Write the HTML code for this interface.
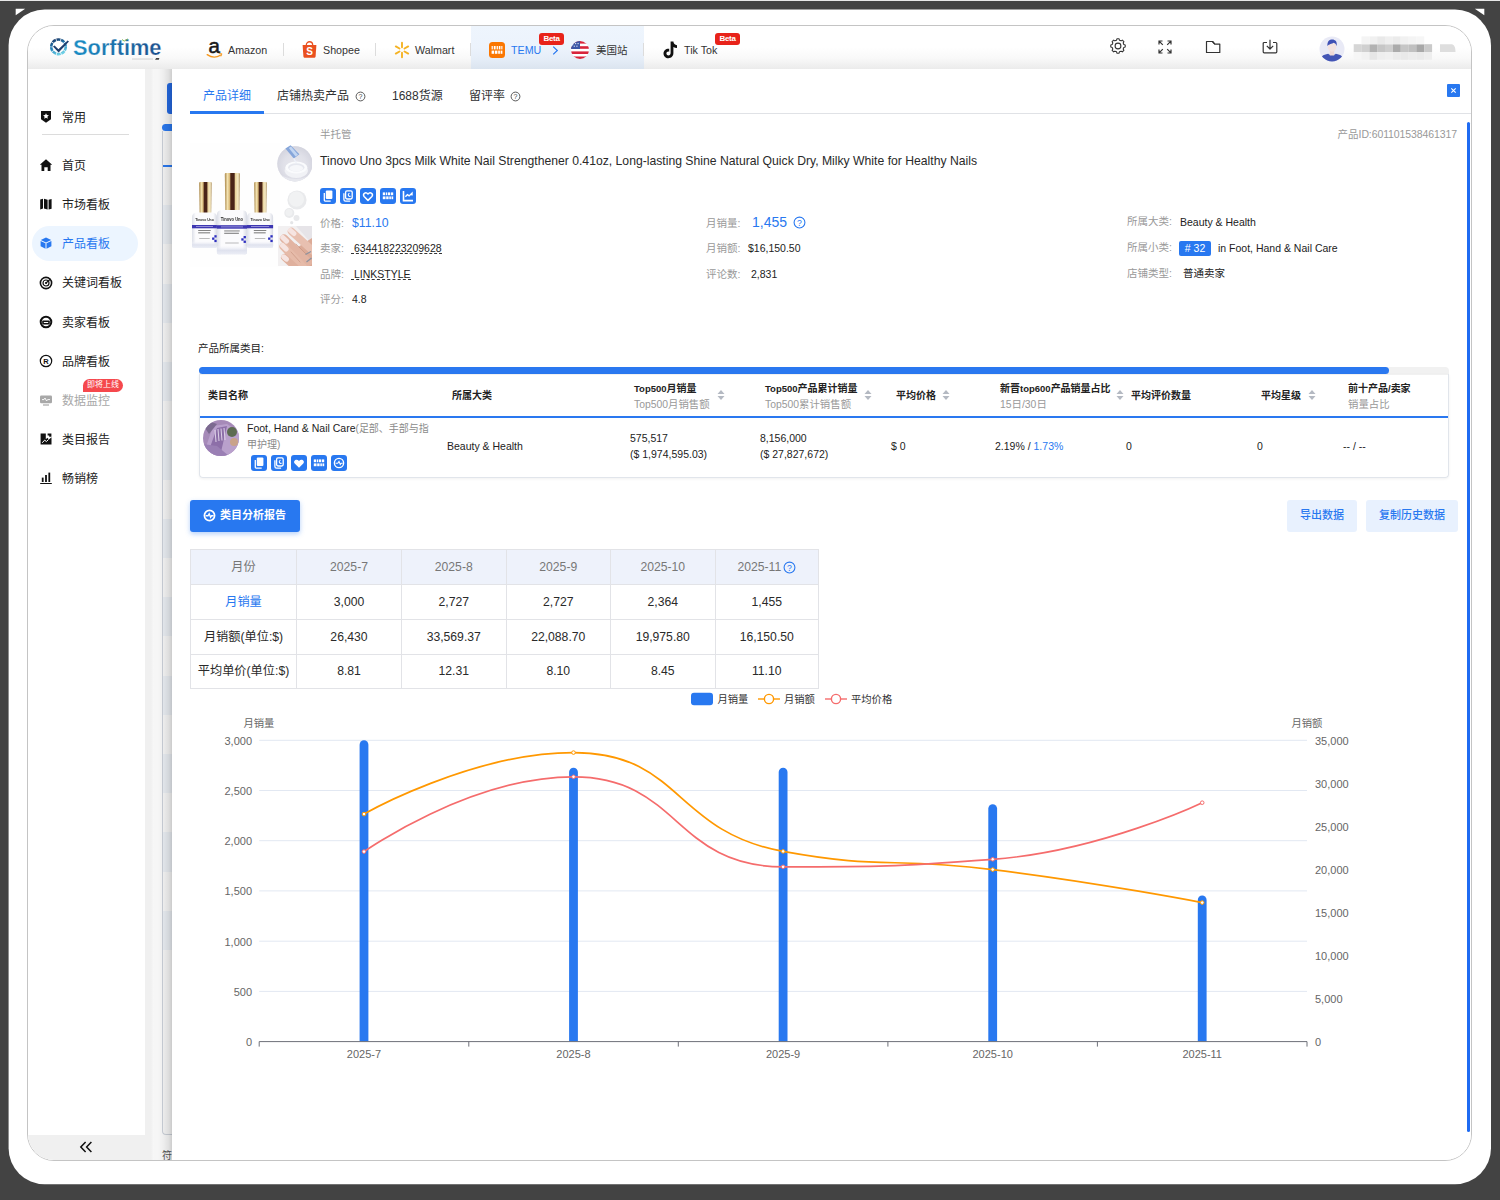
<!DOCTYPE html>
<html lang="zh"><head>
<meta charset="utf-8">
<title>Sorftime</title>
<style>
*{box-sizing:border-box;margin:0;padding:0}
html,body{width:1500px;height:1200px;overflow:hidden}
body{background:#434343;font-family:"Liberation Sans","Noto Sans CJK SC",sans-serif;font-size:12px;color:#333;position:relative}
.abs{position:absolute}
.t{position:absolute;white-space:nowrap;line-height:1}
#topline{position:absolute;left:0;top:0;width:1500px;height:1px;background:#e8e8e8}

#app{position:absolute;left:27px;top:25px;width:1445px;height:1136px;border:1px solid #c4c4c4;border-radius:27px;background:#fff;overflow:hidden}
/* inside #app coordinates are offset by (28,26) : use a wrapper shifted so we can use page coords */
#pg{position:absolute;left:-28px;top:-26px;width:1500px;height:1200px}
#header{position:absolute;left:27px;top:25px;width:1445px;height:44px;background:linear-gradient(180deg,#fff 0%,#fff 50%,#f9f9f9 75%,#ebebeb 100%)}
#side{position:absolute;left:27px;top:69px;width:118px;height:1092px;background:#fff}
#strip{position:absolute;left:145px;top:69px;width:27px;height:1092px;background:#f6f6f6}
#drawer{position:absolute;left:172px;top:69px;width:1300px;height:1092px;background:#fff;box-shadow:-1px 0 3px rgba(0,0,0,.06)}
.nav{position:absolute;left:62px;font-size:12px;color:#222;line-height:14px;margin-top:.6px;white-space:nowrap}
.hd{position:absolute;top:44px;font-size:10.7px;color:#333;line-height:12px;white-space:nowrap}
.sep{position:absolute;top:43px;width:1px;height:13px;background:#dcdcdc}
.beta{position:absolute;top:33px;width:25px;height:12px;background:#e8231a;border-radius:3px;color:#fff;font-size:8px;font-weight:bold;line-height:12px;text-align:center;letter-spacing:-.3px}
.tab{position:absolute;top:89px;font-size:12px;line-height:14px;color:#303133;white-space:nowrap}
.lbl{position:absolute;font-size:10.5px;color:#999;line-height:12px;white-space:nowrap}
.val{position:absolute;font-size:10.5px;color:#222;line-height:12px;white-space:nowrap}
.ib{position:absolute;width:16px;height:16px;background:#2878f0;border-radius:3px}
.ib svg{position:absolute;left:0;top:0;width:16px;height:16px}
.th{position:absolute;font-size:10px;font-weight:bold;color:#222;line-height:11px;white-space:nowrap}
.th .la{font-size:9.5px}
.th2{position:absolute;font-size:10.4px;color:#999;line-height:11px;white-space:nowrap}
.td{position:absolute;font-size:10.5px;color:#222;line-height:12px;white-space:nowrap}
.sort{position:absolute;width:8px;height:12px}
#mt{position:absolute;left:190px;top:549px;width:628px;table-layout:fixed;border-collapse:collapse;font-size:12.2px;color:#2a2a2a}
#mt td{border:1px solid #e2e3e7;height:34.6px;text-align:center;padding:0;line-height:14px}
#mt tr:first-child td{background:#eef2fb;color:#777;height:35.200px}
#mt tr:nth-child(2) td{height:35px}
#mt tr:nth-child(4) td{height:34px}
.ax{font-family:"Liberation Sans",sans-serif;font-size:11px;fill:#666}
</style>
<style id="cjst">.cj,.lw{display:inline-block;white-space:nowrap}</style></head>
<body>
<div id="topline"></div>
<svg class="abs" style="left:0;top:0" width="1500" height="40"><path d="M15.7 8.7H25.2L15.7 15.2Z" fill="#fff"></path><path d="M1484.3 8.7H1474.8L1484.3 15.2Z" fill="#fff"></path></svg>
<svg class="abs" style="left:0;top:0" width="1500" height="1200"><rect x="8.600" y="9.600" width="1482.400" height="1174.600" rx="36" fill="#fff"></rect></svg>
<div id="app"><div id="pg">
<div id="strip"></div>
<div class="abs" style="left:145px;top:69px;width:6px;height:1092px;background:#f0f0f0"></div>
<div class="abs" style="left:151px;top:69px;width:3px;height:1092px;background:linear-gradient(90deg,#f0f0f0,#f8f8f8)"></div>
<div class="abs" style="left:162px;top:131px;width:10px;height:1004px;background:#f3f3f3;border-left:1px solid #c9ced6;border-bottom:1px solid #c9ced6;border-radius:0 0 0 4px"></div>
<div class="abs" style="left:163px;top:165.800px;width:9px;height:784px;background:repeating-linear-gradient(180deg,#f4f4f4 0px,#f4f4f4 39.200px,#e8ecf1 39.200px,#e8ecf1 78.400px)"></div>
<div class="abs" style="left:167px;top:83px;width:8px;height:31px;background:#2468e0;border-radius:3px 0 0 3px"></div>
<div class="abs" style="left:162px;top:124px;width:12px;height:7px;background:#2a78ee;border-radius:3.500px 0 0 3.500px"></div>
<div class="abs" style="left:163px;top:165px;width:10px;height:1.500px;background:#2a78ee"></div>
<div class="t" style="left:162px;top:1151px;font-size:10px;color:#555"><span class="cj" style="width: 1em;">符</span></div>
<div class="abs" style="left:158px;top:69px;width:14px;height:1092px;background:linear-gradient(90deg,rgba(0,0,0,0),rgba(0,0,0,.035) 40%,rgba(0,0,0,.13))"></div>
<div id="drawer"></div>
<!-- tabs -->
<div class="abs" style="left:190px;top:113px;width:1282px;height:1px;background:#e0e2e6"></div>
<div class="abs" style="left:190px;top:111px;width:74px;height:2.500px;background:#2878f0"></div>
<div class="tab" style="left:203px;color:#2878f0"><span class="cj" style="width: 4em;">产品详细</span></div>
<div class="tab" style="left:277px"><span class="cj" style="width: 6em;">店铺热卖产品</span></div>
<svg class="abs" style="left:354.500px;top:90.500px" width="11" height="11" viewBox="0 0 10 10"><circle cx="5" cy="5" r="4" fill="none" stroke="#444" stroke-width=".8"></circle><text x="5" y="7.300" text-anchor="middle" font-family="Liberation Sans, sans-serif" font-size="6.500" fill="#444">?</text></svg>
<div class="tab" style="left:392px"><span class="lw" style="width: 26.7px;">1688</span><span class="cj" style="width: 2em;">货源</span></div>
<div class="tab" style="left:469px"><span class="cj" style="width: 3em;">留评率</span></div>
<svg class="abs" style="left:509.500px;top:90.500px" width="11" height="11" viewBox="0 0 10 10"><circle cx="5" cy="5" r="4" fill="none" stroke="#444" stroke-width=".8"></circle><text x="5" y="7.300" text-anchor="middle" font-family="Liberation Sans, sans-serif" font-size="6.500" fill="#444">?</text></svg>
<div class="abs" style="left:1447px;top:84px;width:13px;height:13px;background:#2878f0;border-radius:1px"></div>
<svg class="abs" style="left:1447px;top:84px" width="13" height="13" viewBox="0 0 13 13"><path d="M4.300 4.300l4.400 4.400M8.700 4.300L4.300 8.700" stroke="#fff" stroke-width="1.100"></path></svg>
<div class="abs" style="left:1467px;top:122px;width:3px;height:1010px;background:#1f6bf2;border-radius:1.500px"></div>
<!-- product image -->
<svg class="abs" style="left:188px;top:140px" width="128" height="130" viewBox="188 140 128 130">
<defs>
<linearGradient id="gold" x1="0" x2="1" y1="0" y2="0"><stop offset="0" stop-color="#a8864a"></stop><stop offset=".18" stop-color="#f3e2b0"></stop><stop offset=".32" stop-color="#d8b878"></stop><stop offset=".4" stop-color="#4a2418"></stop><stop offset=".62" stop-color="#4a2418"></stop><stop offset=".7" stop-color="#e8d29a"></stop><stop offset=".88" stop-color="#f6ebc8"></stop><stop offset="1" stop-color="#a88850"></stop></linearGradient>
<linearGradient id="btl" x1="0" x2="1" y1="0" y2="0"><stop offset="0" stop-color="#dcdfe8"></stop><stop offset=".15" stop-color="#fbfbfd"></stop><stop offset=".85" stop-color="#fbfbfd"></stop><stop offset="1" stop-color="#d8dbe4"></stop></linearGradient>
<linearGradient id="glass" x1="0" x2="0" y1="0" y2="1"><stop offset="0" stop-color="#f4f5fa" stop-opacity=".2"></stop><stop offset=".5" stop-color="#dfe2ee"></stop><stop offset="1" stop-color="#eceef6"></stop></linearGradient><filter id="soft" x="-5%" y="-5%" width="110%" height="110%"><feGaussianBlur stdDeviation=".45"></feGaussianBlur></filter><radialGradient id="jar" cx=".5" cy=".55" r=".6"><stop offset="0" stop-color="#fdfdfe"></stop><stop offset=".55" stop-color="#eef0f5"></stop><stop offset="1" stop-color="#cfd1dc"></stop></radialGradient>
<linearGradient id="skin" x1="0" x2="1" y1="0" y2="1"><stop offset="0" stop-color="#f4d9cf"></stop><stop offset="1" stop-color="#d9a08c"></stop></linearGradient>
<clipPath id="hc"><rect x="278" y="226" width="34" height="40"></rect></clipPath><clipPath id="imgclip"><rect x="190" y="143" width="122" height="124"></rect></clipPath><clipPath id="jarclip"><circle cx="294.900" cy="163.800" r="17.600"></circle></clipPath>
</defs>
<rect x="190" y="143" width="90" height="124" fill="#fefefe"></rect>
<!-- left bottle -->
<path d="M199.1 183.0q0-1 1-1H210.7q1 0 1 1L211.2 212.9H199.6z" fill="url(#gold)"></path>
<path d="M192.0 217.1q0-4.2 5.2-4.6000000000000005H211.8q5.2 .4 5.2 4.6000000000000005V245.6q0 2.500-2.500 2.500H194.5q-2.500 0-2.500-2.500z" fill="url(#btl)"></path>
<path d="M192.0 241.5H217.0V245.6q0 2.500-2.500 2.500H194.5q-2.500 0-2.500-2.500z" fill="url(#glass)"></path>
<rect x="192.0" y="225.0" width="25.0" height="3.3" fill="#3d36b2"></rect>
<rect x="196.0" y="226.2" width="17.0" height=".8" fill="#a9a6e0"></rect>
<text x="204.5" y="221.2" text-anchor="middle" font-family="Liberation Sans, sans-serif" font-weight="bold" font-size="4.3" fill="#1a1a1a" opacity=".96" textLength="18.5" lengthAdjust="spacingAndGlyphs">Tinovo Uno</text>
<rect x="198.2" y="230.1" width="12.5" height=".9" fill="#777"></rect>
<rect x="198.2" y="232.4" width="11.9" height=".9" fill="#666"></rect>
<rect x="199.2" y="238.1" width="10.5" height=".8" fill="#aaa"></rect>
<g fill="#2d2fc0"><rect x="214.4" y="235.2" width="2.3" height="2.3"></rect><rect x="212.1" y="237.5" width="2.3" height="2.3"></rect><rect x="214.4" y="239.8" width="2.3" height="2.3"></rect></g>
<!-- right bottle -->
<path d="M254.1 183.0q0-1 1-1H265.8q1 0 1 1L266.3 212.9H254.6z" fill="url(#gold)"></path>
<path d="M247.0 217.1q0-4.2 5.2-4.6000000000000005H267.9q5.2 .4 5.2 4.6000000000000005V245.6q0 2.500-2.500 2.500H249.5q-2.500 0-2.500-2.500z" fill="url(#btl)"></path>
<path d="M247.0 241.5H273.1V245.6q0 2.500-2.500 2.500H249.5q-2.500 0-2.500-2.500z" fill="url(#glass)"></path>
<rect x="247.0" y="225.0" width="26.1" height="3.3" fill="#3d36b2"></rect>
<rect x="251.0" y="226.2" width="18.1" height=".8" fill="#a9a6e0"></rect>
<text x="260.1" y="221.2" text-anchor="middle" font-family="Liberation Sans, sans-serif" font-weight="bold" font-size="4.3" fill="#1a1a1a" opacity=".96" textLength="19.3" lengthAdjust="spacingAndGlyphs">Tinovo Uno</text>
<rect x="253.8" y="230.1" width="12.5" height=".9" fill="#777"></rect>
<rect x="253.8" y="232.4" width="11.9" height=".9" fill="#666"></rect>
<rect x="254.8" y="238.1" width="10.5" height=".8" fill="#aaa"></rect>
<g fill="#2d2fc0"><rect x="270.4" y="235.2" width="2.3" height="2.3"></rect><rect x="268.1" y="237.5" width="2.3" height="2.3"></rect><rect x="270.4" y="239.8" width="2.3" height="2.3"></rect></g>
<!-- center bottle -->
<path d="M224.8 173.9q0-1 1-1H238.9q1 0 1 1L239.4 210.5H225.3z" fill="url(#gold)"></path>
<path d="M216.9 214.7q0-4.2 5.2-4.6000000000000005H241.8q5.2 .4 5.2 4.6000000000000005V252.0q0 2.500-2.500 2.500H219.4q-2.500 0-2.500-2.500z" fill="url(#btl)"></path>
<path d="M216.9 246.0H247.0V252.0q0 2.500-2.500 2.500H219.4q-2.500 0-2.500-2.500z" fill="url(#glass)"></path>
<rect x="216.9" y="225.2" width="30.1" height="3.5" fill="#3d36b2"></rect>
<rect x="220.9" y="226.5" width="22.1" height=".8" fill="#a9a6e0"></rect>
<text x="231.9" y="220.6" text-anchor="middle" font-family="Liberation Sans, sans-serif" font-weight="bold" font-size="5.1" fill="#1a1a1a" opacity=".96" textLength="22.3" lengthAdjust="spacingAndGlyphs">Tinovo Uno</text>
<rect x="224.2" y="230.5" width="15.5" height=".9" fill="#777"></rect>
<rect x="224.2" y="232.8" width="14.7" height=".9" fill="#666"></rect>
<rect x="225.2" y="242.6" width="13.5" height=".8" fill="#aaa"></rect>
<g fill="#2d2fc0"><rect x="243.6" y="236.0" width="2.3" height="2.3"></rect><rect x="241.3" y="238.3" width="2.3" height="2.3"></rect><rect x="243.6" y="240.6" width="2.3" height="2.3"></rect></g>
<!-- circle jar -->
<g clip-path="url(#imgclip)">
<circle cx="294.9" cy="163.8" r="17.6" fill="#d2d1dc"></circle>
<circle cx="294.9" cy="163.8" r="17.6" fill="url(#jar)" opacity=".5"></circle>
<g clip-path="url(#jarclip)"><path d="M276 170c4 6 12 9 20 9s14-3 18-9v14h-38z" fill="#e9eaf0" opacity=".85"></path></g>
<ellipse cx="296.300" cy="170.500" rx="11.600" ry="7.400" fill="#f1f2f6"></ellipse>
<ellipse cx="296.300" cy="167.600" rx="11" ry="6" fill="#fafbfd"></ellipse>
<ellipse cx="296.300" cy="167.400" rx="8.200" ry="4.200" fill="#e6e8ef"></ellipse>
<ellipse cx="296.300" cy="168.300" rx="6.800" ry="3.200" fill="#f6f7fa"></ellipse>
<path d="M285.400 148.600l5.200-3.400 8.800 9-5.600 4.200z" fill="#86a6da"></path><path d="M288.800 148l2.200-1.400 7 8.200-2.400 1.600z" fill="#c2d6f2"></path>
<path d="M293.600 158.400l2.800 4.600" stroke="#eef2fa" stroke-width="1.200"></path>
</g>
<!-- blobs -->
<circle cx="297" cy="200" r="9.600" fill="#e9eaec"></circle><circle cx="296.400" cy="199.200" r="7.600" fill="#f1f2f3"></circle>
<circle cx="289.300" cy="213" r="5" fill="#e9eaec"></circle><circle cx="289" cy="212.600" r="3.500" fill="#f0f1f2"></circle><circle cx="296.500" cy="218" r="3" fill="#e8e9eb"></circle><circle cx="291.700" cy="222.700" r="1.600" fill="#e4e5e7"></circle>
<!-- hand -->
<g clip-path="url(#hc)" filter="url(#soft)">
<rect x="278" y="226" width="34" height="40" fill="#f2f0f1"></rect>
<path d="M296 226h16v18z" fill="#e6e4e8"></path>
<path d="M298 247L312 238V266H290z" fill="#dcab97"></path>
<g stroke-linecap="round" fill="none">
<path d="M291.500 231.500L313 251" stroke="#e8c0b0" stroke-width="7.500"></path>
<path d="M284 238.500L308 262" stroke="#e2b4a2" stroke-width="8.200"></path>
<path d="M283.500 246.500L303 267" stroke="#e6bba9" stroke-width="8"></path>
<path d="M284.500 257.500L296 268" stroke="#dfb09d" stroke-width="7"></path>
<path d="M290.500 230.500l3.400 3M282.800 237.500l3.800 3.600M282.500 245.500l3.600 3.600M283.800 256.800l2.600 2.400" stroke="#f6e4e1" stroke-width="5"></path>
<path d="M296 244l10 10M291 252l9 10" stroke="#c58f7c" stroke-width="1" opacity=".6"></path>
</g>
<path d="M305.500 254.500l5.500-3M306.500 262l5-4" stroke="#8c92a0" stroke-width="1.300"></path>
</g>
</svg>

<!-- product info -->
<div class="lbl" style="left:320px;top:128px"><span class="cj" style="width: 3em;">半托管</span></div>
<div class="lbl" style="right:43px;top:128px;font-size:10.500px;letter-spacing:-.1px"><span class="cj" style="width: 2em;">产品</span><span class="lw" style="width: 98.44px;">ID:601101538461317</span></div>
<div class="t" id="ptitle" style="left:320px;top:155px;font-size:12.2px;color:#2a2a2a;line-height:13px">Tinovo Uno 3pcs Milk White Nail Strengthener 0.41oz, Long-lasting Shine Natural Quick Dry, Milky White for Healthy Nails</div>
<div class="ib" style="left:320px;top:188px"><svg viewBox="0 0 16 16"><rect x="5.800" y="2.600" width="6.600" height="8.400" rx="1" fill="#fff"></rect><path d="M4.300 5v7.300c0 .5.300.8.800.8h5.600" fill="none" stroke="#fff" stroke-width="1.300"></path></svg></div>
<div class="ib" style="left:340px;top:188px"><svg viewBox="0 0 16 16"><rect x="5.600" y="2.800" width="6.600" height="8.200" rx="1.400" fill="none" stroke="#fff" stroke-width="1.300"></rect><path d="M3.900 5.200v6.400c0 1 .6 1.600 1.600 1.600h4.600" fill="none" stroke="#fff" stroke-width="1.300"></path><path d="M9.600 5.200c-1.800.2-1.800 3 0 3.200h1" fill="none" stroke="#fff" stroke-width="1.100"></path></svg></div>
<div class="ib" style="left:360px;top:188px"><svg viewBox="0 0 16 16"><path d="M8 12.400L4.100 8.500c-2-2.400 1.500-5.300 3.900-2.500 2.400-2.800 5.900.1 3.900 2.500z" fill="none" stroke="#fff" stroke-width="1.500" stroke-linejoin="round"></path></svg></div>
<div class="ib" style="left:380px;top:188px"><svg viewBox="0 0 16 16"><g fill="#fff"><rect x="2.800" y="4.400" width="2.300" height="2.800"></rect><rect x="5.800" y="4.400" width="1.500" height="2.800"></rect><rect x="8" y="4.400" width="2.100" height="2.800"></rect><rect x="10.800" y="4.400" width="2.400" height="2.800"></rect><rect x="2.800" y="8.400" width="2.700" height="2.800"></rect><rect x="6.200" y="8.400" width="2.400" height="2.800"></rect><rect x="9.300" y="8.400" width="1.600" height="2.800"></rect><rect x="11.500" y="8.400" width="1.700" height="2.800"></rect></g></svg></div>
<div class="ib" style="left:400px;top:188px"><svg viewBox="0 0 16 16"><path d="M3.500 3v9.600h9.500" fill="none" stroke="#fff" stroke-width="1.600"></path><path d="M5.400 8.800l2-2.200 1.700 1.300 2.900-2.700v2.200" fill="none" stroke="#fff" stroke-width="1.400"></path></svg></div>

<div class="lbl" style="left:320px;top:217px"><span class="cj" style="width: 2em;">价格</span><span class="lw" style="width: 2.92px;">:</span></div><div class="t" style="left:352px;top:217px;font-size:12.3px;color:#2878f0">$11.10</div>
<div class="lbl" style="left:320px;top:242px"><span class="cj" style="width: 2em;">卖家</span><span class="lw" style="width: 2.92px;">:</span></div><div class="val" style="left:351px;top:242px;border-bottom:1px dashed #333;padding-left:3px;line-height:10px;top:243px">634418223209628</div>
<div class="lbl" style="left:320px;top:268px"><span class="cj" style="width: 2em;">品牌</span><span class="lw" style="width: 2.92px;">:</span></div><div class="val" style="left:351px;top:269px;border-bottom:1px dashed #333;padding-left:3px;line-height:10px">LINKSTYLE</div>
<div class="lbl" style="left:320px;top:293px"><span class="cj" style="width: 2em;">评分</span><span class="lw" style="width: 2.92px;">:</span></div><div class="val" style="left:352px;top:293px">4.8</div>

<div class="lbl" style="left:706px;top:217px"><span class="cj" style="width: 3em;">月销量</span><span class="lw" style="width: 2.92px;">:</span></div><div class="t" style="left:752px;top:215px;font-size:14px;color:#2878f0">1,455</div>
<svg class="abs" style="left:793px;top:216px" width="13" height="13" viewBox="0 0 12 12"><circle cx="6" cy="6" r="5" fill="none" stroke="#2878f0" stroke-width="1"></circle><text x="6" y="8.800" text-anchor="middle" font-family="Liberation Sans, sans-serif" font-size="8" fill="#2878f0">?</text></svg>
<div class="lbl" style="left:706px;top:242px"><span class="cj" style="width: 3em;">月销额</span><span class="lw" style="width: 2.92px;">:</span></div><div class="val" style="left:748px;top:242px">$16,150.50</div>
<div class="lbl" style="left:706px;top:268px"><span class="cj" style="width: 3em;">评论数</span><span class="lw" style="width: 2.92px;">:</span></div><div class="val" style="left:751px;top:268px">2,831</div>

<div class="lbl" style="left:1127px;top:215px"><span class="cj" style="width: 4em;">所属大类</span><span class="lw" style="width: 2.92px;">:</span></div><div class="val" style="left:1180px;top:216px">Beauty &amp; Health</div>
<div class="lbl" style="left:1127px;top:241px"><span class="cj" style="width: 4em;">所属小类</span><span class="lw" style="width: 2.92px;">:</span></div>
<div class="abs" style="left:1179px;top:241px;width:32px;height:15px;background:#2878f0;border-radius:2px;color:#fff;font-size:10.500px;line-height:15px;text-align:center;font-weight:normal"># 32</div>
<div class="val" style="left:1218px;top:242px">in Foot, Hand &amp; Nail Care</div>
<div class="lbl" style="left:1127px;top:267px"><span class="cj" style="width: 4em;">店铺类型</span><span class="lw" style="width: 2.92px;">:</span></div><div class="val" style="left:1183px;top:267px"><span class="cj" style="width: 4em;">普通卖家</span></div>

<div class="t" style="left:198px;top:343px;font-size:10.500px;color:#222"><span class="cj" style="width: 6em;">产品所属类目</span><span class="lw" style="width: 2.92px;">:</span></div>
<!-- category table -->
<div class="abs" style="left:199px;top:367px;width:1250px;height:8px;background:#f1f1f1;border-radius:4px 4px 0 0"></div>
<div class="abs" style="left:199px;top:367px;width:1190px;height:7px;background:#2a78f0;border-radius:3.500px"></div>
<div class="abs" style="left:199px;top:374px;width:1250px;height:104px;border:1px solid #e1e5eb;border-top:none;border-radius:0 0 4px 4px;box-shadow:0 1px 3px rgba(0,0,0,.06)"></div>
<div class="abs" style="left:200px;top:416px;width:1248px;height:2px;background:#2a78f0"></div>
<div class="th" style="left:208px;top:390px"><span class="cj" style="width: 4em;">类目名称</span></div>
<div class="th" style="left:452px;top:390px"><span class="cj" style="width: 4em;">所属大类</span></div>
<div class="th" style="left:634px;top:383px"><span class="la"><span class="lw" style="width: 32.56px;">Top500</span></span><span class="cj" style="width: 3em;">月销量</span></div><div class="th2" style="left:634px;top:399px"><span class="lw" style="width: 34.09px;">Top500</span><span class="cj" style="width: 4em;">月销售额</span></div>
<div class="th" style="left:765px;top:383px"><span class="la"><span class="lw" style="width: 32.56px;">Top500</span></span><span class="cj" style="width: 6em;">产品累计销量</span></div><div class="th2" style="left:765px;top:399px"><span class="lw" style="width: 34.09px;">Top500</span><span class="cj" style="width: 5em;">累计销售额</span></div>
<div class="th" style="left:896px;top:390px"><span class="cj" style="width: 4em;">平均价格</span></div>
<div class="th" style="left:1000px;top:383px"><span class="cj" style="width: 2em;">新晋</span><span class="la"><span class="lw" style="width: 30.63px;">top600</span></span><span class="cj" style="width: 6em;">产品销量占比</span></div><div class="th2" style="left:1000px;top:399px"><span class="lw" style="width: 11.56px;">15</span><span class="cj" style="width: 1em;">日</span><span class="lw" style="width: 14.45px;">/30</span><span class="cj" style="width: 1em;">日</span></div>
<div class="th" style="left:1131px;top:390px"><span class="cj" style="width: 6em;">平均评价数量</span></div>
<div class="th" style="left:1261px;top:390px"><span class="cj" style="width: 4em;">平均星级</span></div>
<div class="th" style="left:1348px;top:383px"><span class="cj" style="width: 4em;">前十产品</span><span class="la"><span class="lw" style="width: 2.64px;">/</span></span><span class="cj" style="width: 2em;">卖家</span></div><div class="th2" style="left:1348px;top:399px"><span class="cj" style="width: 4em;">销量占比</span></div>
<svg class="sort" style="left:717px;top:389px" viewBox="0 0 8 12"><path d="M4 1L7.500 5H.5zM4 11L.5 7h7z" fill="#b4b9c2"></path></svg>
<svg class="sort" style="left:864px;top:389px" viewBox="0 0 8 12"><path d="M4 1L7.500 5H.5zM4 11L.5 7h7z" fill="#b4b9c2"></path></svg>
<svg class="sort" style="left:942px;top:389px" viewBox="0 0 8 12"><path d="M4 1L7.500 5H.5zM4 11L.5 7h7z" fill="#b4b9c2"></path></svg>
<svg class="sort" style="left:1116px;top:389px" viewBox="0 0 8 12"><path d="M4 1L7.500 5H.5zM4 11L.5 7h7z" fill="#b4b9c2"></path></svg>
<svg class="sort" style="left:1308px;top:389px" viewBox="0 0 8 12"><path d="M4 1L7.500 5H.5zM4 11L.5 7h7z" fill="#b4b9c2"></path></svg>
<!-- row -->
<svg class="abs" style="left:203px;top:420px" width="36" height="36" viewBox="0 0 36 36"><defs><clipPath id="cc"><circle cx="18" cy="18" r="18"></circle></clipPath></defs>
<g clip-path="url(#cc)"><rect width="36" height="36" fill="#a68ab8"></rect><path d="M0 36L10 6l14-2 12 8v24z" fill="#b9a0cc"></path><path d="M6 30l8-22 10-2-6 26z" fill="#8d6fa8"></path><path d="M12 10l1 12M15 9l1 12M18 8.500l1 12M21 8l1 12" stroke="#e6dcee" stroke-width=".9"></path><circle cx="29" cy="12" r="5" fill="#5d6b52"></circle><circle cx="31" cy="22" r="4" fill="#c9a28a"></circle><path d="M0 24l14 2 12 10H0z" fill="#9a7fb4"></path><path d="M2 8l6-6 6 2-8 10z" fill="#7c6a90"></path></g></svg>
<div class="td" style="left:247px;top:422px"><span class="lw" style="width: 108.56px;">Foot, Hand &amp; Nail Care</span><span style="color:#8a8a8a;font-size:10px"><span class="lw" style="width: 3.34px;">(</span><span class="cj" style="width: 7em;">足部、手部与指</span></span></div>
<div class="td" style="left:247px;top:439px;color:#8a8a8a;font-size:10px"><span class="cj" style="width: 3em;">甲护理</span><span class="lw" style="width: 3.34px;">)</span></div>
<div class="ib" style="left:251px;top:455px"><svg viewBox="0 0 16 16"><rect x="5.800" y="2.600" width="6.600" height="8.400" rx="1" fill="#fff"></rect><path d="M4.300 5v7.300c0 .5.300.8.800.8h5.600" fill="none" stroke="#fff" stroke-width="1.300"></path></svg></div>
<div class="ib" style="left:271px;top:455px"><svg viewBox="0 0 16 16"><rect x="5.600" y="2.800" width="6.600" height="8.200" rx="1.400" fill="none" stroke="#fff" stroke-width="1.300"></rect><path d="M3.900 5.200v6.400c0 1 .6 1.600 1.600 1.600h4.600" fill="none" stroke="#fff" stroke-width="1.300"></path><path d="M9.600 5.200c-1.800.2-1.800 3 0 3.200h1" fill="none" stroke="#fff" stroke-width="1.100"></path></svg></div>
<div class="ib" style="left:291px;top:455px"><svg viewBox="0 0 16 16"><path d="M8 12.800L3.700 8.500c-2.100-2.500 1.800-5.500 4.300-2.600 2.500-2.900 6.400.1 4.300 2.600z" fill="#fff"></path></svg></div>
<div class="ib" style="left:311px;top:455px"><svg viewBox="0 0 16 16"><g fill="#fff"><rect x="2.800" y="4.400" width="2.300" height="2.800"></rect><rect x="5.800" y="4.400" width="1.500" height="2.800"></rect><rect x="8" y="4.400" width="2.100" height="2.800"></rect><rect x="10.800" y="4.400" width="2.400" height="2.800"></rect><rect x="2.800" y="8.400" width="2.700" height="2.800"></rect><rect x="6.200" y="8.400" width="2.400" height="2.800"></rect><rect x="9.300" y="8.400" width="1.600" height="2.800"></rect><rect x="11.500" y="8.400" width="1.700" height="2.800"></rect></g></svg></div>
<div class="ib" style="left:331px;top:455px"><svg viewBox="0 0 16 16"><circle cx="8" cy="8" r="4.600" fill="none" stroke="#fff" stroke-width="1.400"></circle><path d="M4.600 8.200h2.200l1.200-1.800 1.300 3 .9-1.200h1.400" fill="none" stroke="#fff" stroke-width="1.100"></path></svg></div>
<div class="td" style="left:447px;top:440px">Beauty &amp; Health</div>
<div class="td" style="left:630px;top:432px">575,517</div><div class="td" style="left:630px;top:448px">($ 1,974,595.03)</div>
<div class="td" style="left:760px;top:432px">8,156,000</div><div class="td" style="left:760px;top:448px">($ 27,827,672)</div>
<div class="td" style="left:891px;top:440px">$ 0</div>
<div class="td" style="left:995px;top:440px">2.19% / <span style="color:#2878f0">1.73%</span></div>
<div class="td" style="left:1126px;top:440px">0</div>
<div class="td" style="left:1257px;top:440px">0</div>
<div class="td" style="left:1343px;top:440px">-- / --</div>
<!-- buttons -->
<div class="abs" style="left:190px;top:500px;width:110px;height:32px;background:#2878f0;border-radius:3px;box-shadow:0 2px 5px rgba(40,120,240,.35)"></div>
<svg class="abs" style="left:203px;top:509px" width="13" height="13" viewBox="0 0 13 13"><circle cx="6.500" cy="6.500" r="5.100" fill="none" stroke="#fff" stroke-width="1.700"></circle><path d="M2.600 6.800h2.400l1.200-2 1.400 3.400 1-1.400h2" fill="none" stroke="#fff" stroke-width="1.400"></path></svg>
<div class="t" style="left:220px;top:510px;font-size:11px;font-weight:bold;color:#fff"><span class="cj" style="width: 6em;">类目分析报告</span></div>
<div class="abs" style="left:1287px;top:500px;width:70px;height:32px;background:#e8f1fe;border-radius:3px;color:#2878f0;font-size:11px;line-height:31px;text-align:center;font-weight:500"><span class="cj" style="width: 4em;">导出数据</span></div>
<div class="abs" style="left:1366px;top:500px;width:92px;height:32px;background:#e8f1fe;border-radius:3px;color:#2878f0;font-size:11px;line-height:31px;text-align:center;font-weight:500"><span class="cj" style="width: 6em;">复制历史数据</span></div>
<!-- monthly table -->
<table id="mt"><tbody><tr><td style="width:106px"><span class="cj" style="width: 2em;">月份</span></td><td style="width:105px">2025-7</td><td style="width:104.5px">2025-8</td><td style="width:104.5px">2025-9</td><td style="width:104.5px">2025-10</td><td style="width:103.5px">2025-11 <svg width="13" height="13" viewBox="0 0 12 12" style="vertical-align:-2.500px;margin-left:-1.500px"><circle cx="6" cy="6" r="5" fill="none" stroke="#2878f0" stroke-width="1"></circle><text x="6" y="8.800" text-anchor="middle" font-family="Liberation Sans, sans-serif" font-size="8" fill="#2878f0">?</text></svg></td></tr>
<tr><td style="color:#2878f0"><span class="cj" style="width: 3em;">月销量</span></td><td>3,000</td><td>2,727</td><td>2,727</td><td>2,364</td><td>1,455</td></tr>
<tr><td><span class="cj" style="width: 3em;">月销额</span><span class="lw" style="width: 4.06px;">(</span><span class="cj" style="width: 2em;">单位</span><span class="lw" style="width: 14.23px;">:$)</span></td><td>26,430</td><td>33,569.37</td><td>22,088.70</td><td>19,975.80</td><td>16,150.50</td></tr>
<tr><td><span class="cj" style="width: 4em;">平均单价</span><span class="lw" style="width: 4.06px;">(</span><span class="cj" style="width: 2em;">单位</span><span class="lw" style="width: 14.23px;">:$)</span></td><td>8.81</td><td>12.31</td><td>8.10</td><td>8.45</td><td>11.10</td></tr></tbody></table>
<svg class="abs" style="left:172px;top:688px" width="1290" height="400" viewBox="172 688 1290 400">
<rect x="691" y="692.800" width="22" height="12.400" rx="3" fill="#2878f0"></rect>
<path d="M758 699h22" stroke="#ff9800" stroke-width="1.400"></path><circle cx="769" cy="699" r="4.600" fill="#fff" stroke="#ff9800" stroke-width="1.400"></circle>
<path d="M825 699h22" stroke="#f56c6c" stroke-width="1.400"></path><circle cx="836" cy="699" r="4.600" fill="#fff" stroke="#f56c6c" stroke-width="1.400"></circle>
<text x="252" y="1045.9" text-anchor="end" class="ax">0</text>
<path d="M259.2 991.4H1307.0" stroke="#e2e8f2" stroke-width="1"></path>
<text x="252" y="995.7" text-anchor="end" class="ax">500</text>
<path d="M259.2 941.2H1307.0" stroke="#e2e8f2" stroke-width="1"></path>
<text x="252" y="945.5" text-anchor="end" class="ax">1,000</text>
<path d="M259.2 890.9H1307.0" stroke="#e2e8f2" stroke-width="1"></path>
<text x="252" y="895.2" text-anchor="end" class="ax">1,500</text>
<path d="M259.2 840.7H1307.0" stroke="#e2e8f2" stroke-width="1"></path>
<text x="252" y="845.0" text-anchor="end" class="ax">2,000</text>
<path d="M259.2 790.5H1307.0" stroke="#e2e8f2" stroke-width="1"></path>
<text x="252" y="794.8" text-anchor="end" class="ax">2,500</text>
<path d="M259.2 740.3H1307.0" stroke="#e2e8f2" stroke-width="1"></path>
<text x="252" y="744.6" text-anchor="end" class="ax">3,000</text>
<text x="1315" y="1045.9" class="ax">0</text>
<text x="1315" y="1002.9" class="ax">5,000</text>
<text x="1315" y="959.8" class="ax">10,000</text>
<text x="1315" y="916.8" class="ax">15,000</text>
<text x="1315" y="873.7" class="ax">20,000</text>
<text x="1315" y="830.7" class="ax">25,000</text>
<text x="1315" y="787.6" class="ax">30,000</text>
<text x="1315" y="744.6" class="ax">35,000</text>
<path d="M359.6 1041.6V744.7a4.4 4.4 0 0 1 8.8 0V1041.6z" fill="#2878f0"></path>
<path d="M569.1 1041.6V772.1a4.4 4.4 0 0 1 8.8 0V1041.6z" fill="#2878f0"></path>
<path d="M778.7 1041.6V772.1a4.4 4.4 0 0 1 8.8 0V1041.6z" fill="#2878f0"></path>
<path d="M988.3 1041.6V808.6a4.4 4.4 0 0 1 8.8 0V1041.6z" fill="#2878f0"></path>
<path d="M1197.8 1041.6V899.9a4.4 4.4 0 0 1 8.8 0V1041.6z" fill="#2878f0"></path>
<path d="M259.2 1041.6H1307.0" stroke="#6e7079" stroke-width="1"></path>
<path d="M259.2 1041.6v5" stroke="#6e7079" stroke-width="1"></path>
<path d="M468.8 1041.6v5" stroke="#6e7079" stroke-width="1"></path>
<path d="M678.3 1041.6v5" stroke="#6e7079" stroke-width="1"></path>
<path d="M887.9 1041.6v5" stroke="#6e7079" stroke-width="1"></path>
<path d="M1097.4 1041.6v5" stroke="#6e7079" stroke-width="1"></path>
<path d="M1307.0 1041.6v5" stroke="#6e7079" stroke-width="1"></path>
<text x="364.0" y="1058" text-anchor="middle" class="ax">2025-7</text>
<text x="573.5" y="1058" text-anchor="middle" class="ax">2025-8</text>
<text x="783.1" y="1058" text-anchor="middle" class="ax">2025-9</text>
<text x="992.7" y="1058" text-anchor="middle" class="ax">2025-10</text>
<text x="1202.2" y="1058" text-anchor="middle" class="ax">2025-11</text>
<path d="M364.0 814.1 C364.0 814.1 471.9 752.6 573.5 752.6 C681.4 752.6 673.3 831.4 783.1 851.4 C882.8 869.6 888.3 856.9 992.7 869.6 C1097.9 882.5 1202.2 902.6 1202.2 902.6" fill="none" stroke="#ff9800" stroke-width="1.700"></path>
<path d="M364.0 851.6 C364.0 851.6 470.1 776.8 573.5 776.8 C679.6 776.8 673.9 866.8 783.1 866.8 C883.5 866.8 889.7 866.8 992.7 859.3 C1099.3 851.6 1202.2 802.7 1202.2 802.7" fill="none" stroke="#f56c6c" stroke-width="1.700"></path>
<circle cx="364.0" cy="814.1" r="1.800" fill="#fff" stroke="#ff9800" stroke-width="1"></circle>
<circle cx="573.5" cy="752.6" r="1.800" fill="#fff" stroke="#ff9800" stroke-width="1"></circle>
<circle cx="783.1" cy="851.4" r="1.800" fill="#fff" stroke="#ff9800" stroke-width="1"></circle>
<circle cx="992.7" cy="869.6" r="1.800" fill="#fff" stroke="#ff9800" stroke-width="1"></circle>
<circle cx="1202.2" cy="902.6" r="1.800" fill="#fff" stroke="#ff9800" stroke-width="1"></circle>
<circle cx="364.0" cy="851.6" r="1.800" fill="#fff" stroke="#f56c6c" stroke-width="1"></circle>
<circle cx="573.5" cy="776.8" r="1.800" fill="#fff" stroke="#f56c6c" stroke-width="1"></circle>
<circle cx="783.1" cy="866.8" r="1.800" fill="#fff" stroke="#f56c6c" stroke-width="1"></circle>
<circle cx="992.7" cy="859.3" r="1.800" fill="#fff" stroke="#f56c6c" stroke-width="1"></circle>
<circle cx="1202.2" cy="802.7" r="1.800" fill="#fff" stroke="#f56c6c" stroke-width="1"></circle>
</svg>
<div class="t" style="left:717.500px;top:695px;font-size:10.300px;color:#333"><span class="cj" style="width: 3em;">月销量</span></div>
<div class="t" style="left:784px;top:695px;font-size:10.300px;color:#333"><span class="cj" style="width: 3em;">月销额</span></div>
<div class="t" style="left:851px;top:695px;font-size:10.300px;color:#333"><span class="cj" style="width: 4em;">平均价格</span></div>
<div class="t" style="left:243.500px;top:718.500px;font-size:10.300px;color:#666"><span class="cj" style="width: 3em;">月销量</span></div>
<div class="t" style="left:1291.500px;top:718.500px;font-size:10.300px;color:#666"><span class="cj" style="width: 3em;">月销额</span></div>


<div id="side"></div>
<!-- nav icons -->
<svg class="abs" style="left:38px;top:109px" width="16" height="16" viewBox="0 0 16 16"><path d="M3 2h10v8.200L8 13.800 3 10.200z" fill="#111"></path><path d="M8 4.200l.9 1.900 2 .2-1.500 1.400.4 2L8 8.700l-1.800 1 .4-2L5.100 6.300l2-.2z" fill="#fff"></path></svg>
<div class="nav" style="top:110px"><span class="cj" style="width: 2em;">常用</span></div>
<div class="abs" style="left:42px;top:134px;width:87px;height:1px;background:#dcdcdc"></div>
<svg class="abs" style="left:38px;top:157px" width="16" height="16" viewBox="0 0 16 16"><path d="M8 2.200l6.200 5.600h-1.700V14H9.700v-3.800H6.300V14H3.500V7.800H1.800z" fill="#111"></path></svg>
<div class="nav" style="top:158px"><span class="cj" style="width: 2em;">首页</span></div>
<svg class="abs" style="left:38px;top:196px" width="16" height="16" viewBox="0 0 16 16"><path d="M2.200 3.600l2.800-.8v9.800l-2.800.8zM6 2.800l3.600 1v9.800l-3.600-1zM10.600 3.800l3-.8v9.800l-3 .8z" fill="#111"></path></svg>
<div class="nav" style="top:197px"><span class="cj" style="width: 4em;">市场看板</span></div>
<div class="abs" style="left:32px;top:226px;width:106px;height:35px;border-radius:18px;background:#ecf5ff"></div>
<svg class="abs" style="left:38px;top:235px" width="16" height="16" viewBox="0 0 16 16"><path d="M8 2.400l5.200 2.500L8 7.400 2.800 4.900z" fill="#2878f0"></path><path d="M2.600 5.900l4.900 2.400v5.500l-4.900-2.500zM13.400 5.900L8.500 8.300v5.500l4.900-2.500z" fill="#2878f0"></path></svg>
<div class="nav" style="top:236px;color:#2878f0"><span class="cj" style="width: 4em;">产品看板</span></div>
<svg class="abs" style="left:38px;top:275px" width="16" height="16" viewBox="0 0 16 16"><circle cx="8" cy="8" r="5.600" fill="none" stroke="#111" stroke-width="1.600"></circle><circle cx="8" cy="8" r="3" fill="none" stroke="#111" stroke-width="1.200"></circle><circle cx="8" cy="8" r="1.100" fill="#111"></circle><path d="M8 8l4.500-4" stroke="#111" stroke-width="1.100"></path></svg>
<div class="nav" style="top:275px"><span class="cj" style="width: 5em;">关键词看板</span></div>
<svg class="abs" style="left:38px;top:314px" width="16" height="16" viewBox="0 0 16 16"><circle cx="8" cy="8" r="5.300" fill="none" stroke="#111" stroke-width="2"></circle><rect x="4.200" y="6.600" width="7.600" height="3.800" rx=".8" fill="#111"></rect><rect x="5.800" y="8" width="4.400" height="1" fill="#fff"></rect></svg>
<div class="nav" style="top:315px"><span class="cj" style="width: 4em;">卖家看板</span></div>
<svg class="abs" style="left:38px;top:353px" width="16" height="16" viewBox="0 0 16 16"><circle cx="8" cy="8" r="5.700" fill="none" stroke="#111" stroke-width="1.200"></circle><text x="8" y="10.800" text-anchor="middle" font-family="Liberation Sans, sans-serif" font-weight="bold" font-size="7.500" fill="#111">R</text></svg>
<div class="nav" style="top:354px"><span class="cj" style="width: 4em;">品牌看板</span></div>
<svg class="abs" style="left:38px;top:392px" width="16" height="16" viewBox="0 0 16 16"><rect x="2" y="3.600" width="12" height="7.600" rx="1.200" fill="#a8a8a8"></rect><path d="M4 7.600h2l1-1.600 1.600 3 1-1.400H12" fill="none" stroke="#fff" stroke-width=".9"></path><rect x="5" y="12.400" width="6" height="1.200" fill="#a8a8a8"></rect></svg>
<div class="nav" style="top:393px;color:#a8a8a8"><span class="cj" style="width: 4em;">数据监控</span></div>
<div class="abs" style="left:83px;top:379px;width:40px;height:12.500px;background:#f5484d;border-radius:6.500px 6.500px 6.500px 0;color:#fff;font-size:8px;line-height:12.500px;text-align:center"><span class="cj" style="width: 4em;">即将上线</span></div>
<svg class="abs" style="left:38px;top:431px" width="16" height="16" viewBox="0 0 16 16"><path d="M2.600 2.600h5.200v5.600l1.600-1.400 1.500 1.700 2.600-2.300V13.400H2.600z" fill="#111"></path><path d="M4.200 11.800l2.500-2.700 1.700 1.500 2.200-2.200" stroke="#fff" stroke-width="1" fill="none"></path><path d="M9.600 2.600h3.800v3.200h-2.200v-1.400H9.600z" fill="#111"></path></svg>
<div class="nav" style="top:432px"><span class="cj" style="width: 4em;">类目报告</span></div>
<svg class="abs" style="left:38px;top:470px" width="16" height="16" viewBox="0 0 16 16"><rect x="3.800" y="7.600" width="1.800" height="4.400" fill="#111"></rect><rect x="7.100" y="5" width="1.800" height="7" fill="#111"></rect><rect x="10.400" y="2.600" width="1.800" height="9.400" fill="#111"></rect><rect x="2.200" y="13" width="11.600" height="1" fill="#111"></rect></svg>
<div class="nav" style="top:471px"><span class="cj" style="width: 3em;">畅销榜</span></div>
<div class="abs" style="left:27px;top:1135px;width:118px;height:26px;background:#f0f0f0"></div>
<svg class="abs" style="left:78px;top:1139px" width="16" height="16" viewBox="0 0 16 16" fill="none" stroke="#111" stroke-width="1.500"><path d="M7.600 3L2.800 8l4.800 5M13.400 3L8.600 8l4.800 5"></path></svg>

<div id="header"></div>
<!-- logo -->
<svg class="abs" style="left:46px;top:34px" width="30" height="26" viewBox="0 0 30 26">
<defs><linearGradient id="lg1" x1="0.2" y1="0" x2="0.6" y2="1"><stop offset="0" stop-color="#1f3f6e"></stop><stop offset=".45" stop-color="#1f7fb8"></stop><stop offset="1" stop-color="#6fd0e6"></stop></linearGradient></defs>
<circle cx="12.5" cy="12.8" r="7.3" fill="none" stroke="url(#lg1)" stroke-width="2.6" stroke-dasharray="3.900 .7"></circle>
<path d="M8.6 11.4 L12.4 15.2 L21.6 6.6 L23 7.4 L12.6 18.4 L7 12.6Z" fill="#1f3f6e"></path>
</svg>
<svg class="abs" style="left:72px;top:34px" width="95" height="30" viewBox="0 0 95 30">
<defs><linearGradient id="lg2" x1="0" y1="0" x2="1" y2="0"><stop offset="0" stop-color="#1b8fc6"></stop><stop offset="1" stop-color="#1d4f8c"></stop></linearGradient></defs>
<text x="1" y="21" font-family="Liberation Sans, sans-serif" font-weight="bold" font-size="21.5" fill="url(#lg2)" stroke="#fff" stroke-width=".25" textLength="88.5" lengthAdjust="spacingAndGlyphs">Sorftime</text>
<path d="M50 5.5l2.2 1.6 3.6-2.2" fill="none" stroke="#7ab648" stroke-width=".9"></path>
<rect x="60" y="24.4" width="21" height="1.3" fill="#dadada"></rect><path d="M83 25.8l1.2-1.800h3.200l-.6 1.800z" fill="#444"></path>
</svg>
<!-- amazon -->
<svg class="abs" style="left:206px;top:39px" width="18" height="20" viewBox="0 0 18 20">
<text x="2.6" y="14.2" font-family="Liberation Sans, sans-serif" font-size="20.5" fill="#1a1a1a" stroke="#1a1a1a" stroke-width=".55">a</text>
<path d="M1.2 15.6c4.2 3 9.4 3 13.200.6" fill="none" stroke="#f7981d" stroke-width="1.3" stroke-linecap="round"></path>
<path d="M13 14.6l2.900.200-1 2.600" fill="none" stroke="#f7981d" stroke-width="1" stroke-linejoin="round"></path>
</svg>
<div class="hd" style="left:228px">Amazon</div>
<div class="sep" style="left:283px"></div>
<!-- shopee -->
<svg class="abs" style="left:301px;top:40px" width="17" height="19" viewBox="0 0 17 19">
<path d="M5.3 5.2c0-4.6 6.4-4.6 6.4 0" fill="none" stroke="#ea501f" stroke-width="1.3"></path>
<path d="M1.6 5h13.800l-.8 11.200c-.1 1-.8 1.600-1.800 1.600H4.200c-1 0-1.700-.6-1.800-1.600z" fill="#ea501f"></path>
<text x="8.500" y="15.400" text-anchor="middle" font-family="Liberation Sans, sans-serif" font-weight="bold" font-size="10" fill="#fff">S</text>
</svg>
<div class="hd" style="left:323px">Shopee</div>
<div class="sep" style="left:375px"></div>
<!-- walmart -->
<svg class="abs" style="left:393px;top:41px" width="18" height="18" viewBox="0 0 18 18">
<g stroke="#f5b324" stroke-width="1.9" stroke-linecap="round">
<path d="M9 1.800V6.200M9 11.800V16.200M2.800 5.400L6.500 7.500M11.500 10.500L15.200 12.600M2.800 12.600L6.500 10.500M11.500 7.500L15.200 5.400"></path></g>
</svg>
<div class="hd" style="left:415px">Walmart</div>
<div class="sep" style="left:470px"></div>
<!-- temu -->
<div class="abs" style="left:471px;top:26px;width:173px;height:43px;background:linear-gradient(180deg,#eef5fd 0%,#ecf3fc 50%,#e6eef8 75%,#dbe4ef 100%)"></div>
<svg class="abs" style="left:489px;top:42px" width="16" height="16" viewBox="0 0 16 16">
<rect width="16" height="16" rx="3.500" fill="#fb7701"></rect>
<g fill="#fff"><rect x="2.600" y="4" width="1.200" height="3.400"></rect><rect x="4.800" y="4" width="1.800" height="3.400"></rect><rect x="7.600" y="4" width="1.300" height="3.400"></rect><rect x="9.800" y="4" width="1.600" height="3.400"></rect><rect x="12.300" y="4" width="1.100" height="3.400"></rect>
<rect x="2.600" y="8.600" width="2.600" height="3.200"></rect><rect x="6" y="8.600" width="2.400" height="3.200"></rect><rect x="9.200" y="8.600" width="1.700" height="3.200"></rect><rect x="11.600" y="8.600" width="1.800" height="3.200"></rect></g>
</svg>
<div class="hd" style="left:511px;color:#2878f0">TEMU</div>
<div class="beta" style="left:539px">Beta</div>
<svg class="abs" style="left:551px;top:45px" width="9" height="11" viewBox="0 0 9 11"><path d="M2.200 1.600L6.300 5.500L2.200 9.400" fill="none" stroke="#2878f0" stroke-width="1.200"></path></svg>
<svg class="abs" style="left:571px;top:41px" width="18" height="18" viewBox="0 0 18 18">
<defs><clipPath id="fc"><circle cx="9" cy="9" r="9"></circle></clipPath></defs>
<g clip-path="url(#fc)"><rect width="18" height="18" fill="#fff"></rect>
<g fill="#d8243b"><rect y="0" width="18" height="2.600"></rect><rect y="5.200" width="18" height="2.600"></rect><rect y="10.400" width="18" height="2.600"></rect><rect y="15.500" width="18" height="2.600"></rect></g>
<rect width="9" height="8" fill="#3c56a6"></rect><g fill="#fff" opacity=".8"><rect x="1.500" y="2" width="1.200" height="1.200"></rect><rect x="4" y="2" width="1.200" height="1.200"></rect><rect x="6.500" y="2" width="1.200" height="1.200"></rect><rect x="2.700" y="4.600" width="1.200" height="1.200"></rect><rect x="5.300" y="4.600" width="1.200" height="1.200"></rect></g></g>
</svg>
<div class="hd" style="left:596px;font-size:10.500px"><span class="cj" style="width: 3em;">美国站</span></div>
<div class="sep" style="left:643px"></div>
<!-- tiktok -->
<svg class="abs" style="left:662px;top:40px" width="17" height="20" viewBox="0 0 17 20">
<path d="M8.600 1.500h2.800c.2 2 1.400 3.400 3.600 3.700v2.900c-1.400 0-2.600-.4-3.600-1.100v6.100c0 3.200-2.300 5.200-5 5.200-2.800 0-4.900-2.200-4.900-4.800 0-3 2.500-5.200 5.700-4.800v3c-1.500-.4-2.800.5-2.800 1.800 0 1.100.9 1.900 2 1.900 1.300 0 2.200-.9 2.200-2.400z" fill="#111"></path>
</svg>
<div class="hd" style="left:684px">Tik Tok</div>
<div class="beta" style="left:715px">Beta</div>
<!-- right icons -->
<svg class="abs" style="left:1109px;top:37px" width="18" height="18" viewBox="0 0 18 18" fill="none" stroke="#333" stroke-width="1.1"><path d="M7.55 3.18 L7.92 1.78 L10.08 1.78 L10.45 3.18 L12.09 3.86 L13.34 3.13 L14.87 4.66 L14.14 5.91 L14.82 7.55 L16.22 7.92 L16.22 10.08 L14.82 10.45 L14.14 12.09 L14.87 13.34 L13.34 14.87 L12.09 14.14 L10.45 14.82 L10.08 16.22 L7.92 16.22 L7.55 14.82 L5.91 14.14 L4.66 14.87 L3.13 13.34 L3.86 12.09 L3.18 10.45 L1.78 10.08 L1.78 7.92 L3.18 7.55 L3.86 5.91 L3.13 4.66 L4.66 3.13 L5.91 3.86Z" stroke-linejoin="round"></path><circle cx="9" cy="9" r="2.9"></circle></svg>
<svg class="abs" style="left:1157px;top:39px" width="16" height="16" viewBox="0 0 16 16" fill="none" stroke="#333" stroke-width="1.200">
<path d="M2 5.500V2h3.500M2.300 2.300L5.800 5.800M10.500 2H14v3.500M13.700 2.300L10.200 5.800M2 10.500V14h3.500M2.300 13.700L5.800 10.200M14 10.500V14h-3.500M13.700 13.700L10.200 10.200"></path></svg>
<svg class="abs" style="left:1204px;top:39px" width="18" height="16" viewBox="0 0 18 16" fill="none" stroke="#333" stroke-width="1.200" stroke-linejoin="round">
<path d="M2.500 2.500h6l2.300 2.600h5v8.400H2.500z"></path><path d="M8.500 2.500l2.300 2.600"></path></svg>
<svg class="abs" style="left:1261px;top:38px" width="18" height="18" viewBox="0 0 18 18" fill="none" stroke="#333" stroke-width="1.200" stroke-linejoin="round">
<path d="M6 4.500H3.200c-.6 0-1 .4-1 1v8.300c0 .6.400 1 1 1h11.600c.6 0 1-.4 1-1V5.500c0-.6-.4-1-1-1H12"></path><path d="M9 1.800v9M5.800 7.800L9 11l3.200-3.200"></path></svg>
<!-- avatar -->
<svg class="abs" style="left:1318.800px;top:36px" width="26" height="26" viewBox="0 0 26 26">
<defs><clipPath id="av"><circle cx="13" cy="13" r="12.500"></circle></clipPath></defs>
<circle cx="13" cy="13" r="12.500" fill="#e9eaf6"></circle>
<g clip-path="url(#av)"><path d="M1 27c0-6.500 2.500-8 8.200-9.200 1.200 1.600 6.400 1.600 7.600 0 5.700 1.200 8.200 2.700 8.200 9.200z" fill="#4355b5"></path>
<rect x="10.800" y="14" width="4.400" height="5.500" fill="#efd9d6"></rect><ellipse cx="13" cy="10.800" rx="4.300" ry="5" fill="#f3e3e0"></ellipse>
<path d="M8.500 10.200c-.6-5 2-6.800 4.800-6.800 3 0 5.200 2 4.300 6.800-.5-2-1.600-3-3-3.400-1.700 1.400-4.600 1-6.100 3.400z" fill="#3f51b5"></path></g>
</svg>
<svg class="abs" style="left:1350px;top:34px" width="110" height="30" viewBox="1350 34 110 30"><defs><filter id="bl"><feGaussianBlur stdDeviation=".35"></feGaussianBlur></filter></defs><g filter="url(#bl)"><rect x="1353.7" y="44.2" width="7.9" height="7.900" fill="#d6d6d6"></rect><rect x="1361.5" y="44.2" width="7.9" height="7.900" fill="#d0d0d0"></rect><rect x="1369.4" y="44.2" width="7.9" height="7.900" fill="#b2b2b2"></rect><rect x="1377.2" y="44.2" width="7.9" height="7.900" fill="#c6c6c6"></rect><rect x="1385.0" y="44.2" width="7.9" height="7.900" fill="#cecece"></rect><rect x="1392.9" y="44.2" width="7.9" height="7.900" fill="#ababab"></rect><rect x="1400.7" y="44.2" width="7.9" height="7.900" fill="#c6c6c6"></rect><rect x="1408.5" y="44.2" width="7.9" height="7.900" fill="#c0c0c0"></rect><rect x="1416.3" y="44.2" width="7.9" height="7.900" fill="#a8a8a8"></rect><rect x="1424.2" y="44.2" width="7.9" height="7.900" fill="#cacaca"></rect><rect x="1361.5" y="36.4" width="7.9" height="7.900" fill="#f4f4f4"></rect><rect x="1369.4" y="36.4" width="7.9" height="7.900" fill="#f0f0f0"></rect><rect x="1377.2" y="36.4" width="7.9" height="7.900" fill="#e9e9e9"></rect><rect x="1385.0" y="36.4" width="7.9" height="7.900" fill="#efefef"></rect><rect x="1392.9" y="36.4" width="7.9" height="7.900" fill="#ebebeb"></rect><rect x="1400.7" y="36.4" width="7.9" height="7.900" fill="#f1f1f1"></rect><rect x="1408.5" y="36.4" width="7.9" height="7.900" fill="#f4f4f4"></rect><rect x="1416.3" y="36.4" width="7.9" height="7.900" fill="#f6f6f6"></rect><rect x="1353.7" y="52" width="7.9" height="7.800" fill="#f6f6f6"></rect><rect x="1361.5" y="52" width="7.9" height="7.800" fill="#f2f2f2"></rect><rect x="1369.4" y="52" width="7.9" height="7.800" fill="#e6e6e6"></rect><rect x="1377.2" y="52" width="7.9" height="7.800" fill="#eeeeee"></rect><rect x="1385.0" y="52" width="7.9" height="7.800" fill="#f0f0f0"></rect><rect x="1392.9" y="52" width="7.9" height="7.800" fill="#ebebeb"></rect><rect x="1400.7" y="52" width="7.9" height="7.800" fill="#e9e9e9"></rect><rect x="1408.5" y="52" width="7.9" height="7.800" fill="#ececec"></rect><rect x="1416.3" y="52" width="7.9" height="7.800" fill="#eaeaea"></rect><rect x="1424.2" y="52" width="7.9" height="7.800" fill="#eeeeee"></rect><path d="M1440 44.200h11c3 0 4.500 2.500 4.500 7.900H1440z" fill="#dedede"></path></g></svg>

</div></div>


</body></html>
